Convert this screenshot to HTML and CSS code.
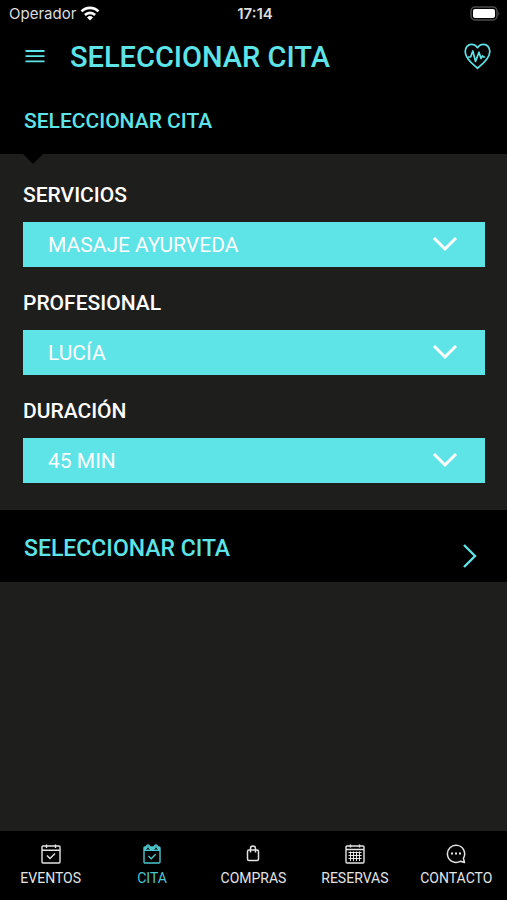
FILE: index.html
```html
<!DOCTYPE html>
<html lang="es">
<head>
  <meta charset="UTF-8">
  <meta name="viewport" content="width=device-width, initial-scale=1.0">
  <title>Seleccionar cita</title>
  <link rel="stylesheet" href="styles.css">
</head>
<body>
  <!-- Status bar -->
  <div class="status-bar">
    <div class="carrier">
      <span>Operador</span>
      <svg width="20" height="15" viewBox="0 0 20 15" fill="none" stroke="#fff" stroke-width="2.6">
        <path d="M1.5 5.4a12 12 0 0 1 17 0"/>
        <path d="M4.9 9a7.2 7.2 0 0 1 10.2 0"/>
        <path d="M10 14.4l-3-3a4.3 4.3 0 0 1 6 0z" fill="#fff" stroke="none"/>
      </svg>
    </div>
    <span class="time">17:14</span>
    <div class="battery">
      <svg width="31" height="15" viewBox="0 0 31 15">
        <rect x="1" y="1" width="26" height="13" rx="4" fill="none" stroke="#4c4c4c" stroke-width="1.5"/>
        <rect x="3" y="3" width="22" height="9" rx="2" fill="#fff"/>
        <path d="M28.5 5.2q1.8 2.3 0 4.6z" fill="#5a5a5a"/>
      </svg>
    </div>
  </div>

  <!-- Header -->
  <header class="header">
    <button class="icon-button" type="button" aria-label="Menú">
      <svg width="20" height="16" viewBox="0 0 20 16" stroke="currentColor" stroke-width="1.8">
        <path d="M0.5 2h19M0.5 7.2h19M0.5 12.4h19"/>
      </svg>
    </button>
    <h1>SELECCIONAR CITA</h1>
    <button class="icon-button" type="button" aria-label="Salud">
      <svg width="27" height="29" viewBox="0 0 27 29" fill="none" stroke="currentColor" stroke-width="1.7" stroke-linejoin="round" stroke-linecap="round">
        <path d="M13.5 25.3C9.5 21.6 1.2 16.3 1.2 8.6C1.2 4.4 4 1.3 7.4 1.3c3 0 5 1.5 6.1 3.4c1.1-1.900 3.100-3.400 6.100-3.400c3.400 0 6.200 3.100 6.200 7.300c0 7.700-8.300 13-12.300 16.700z"/>
        <path d="M4.600 14h2l2.200-6l2.700 10.400l3.500-9.200l2 6.200l1.500-2.600l1 1.200h1"/>
      </svg>
    </button>
  </header>

  <h2 class="section-title">SELECCIONAR CITA</h2>

  <!-- Appointment form -->
  <form class="booking" id="booking">
    <div class="field">
      <label for="service">SERVICIOS</label>
      <div class="select-box">
        <select id="service">
          <option>MASAJE AYURVEDA</option>
        </select>
        <svg class="chevron" width="26" height="16" viewBox="0 0 26 16"><path d="M2 2l11 11l11-11"/></svg>
      </div>
    </div>
    <div class="field">
      <label for="professional">PROFESIONAL</label>
      <div class="select-box">
        <select id="professional">
          <option>LUCÍA</option>
        </select>
        <svg class="chevron" width="26" height="16" viewBox="0 0 26 16"><path d="M2 2l11 11l11-11"/></svg>
      </div>
    </div>
    <div class="field">
      <label for="duration">DURACIÓN</label>
      <div class="select-box">
        <select id="duration">
          <option>45 MIN</option>
        </select>
        <svg class="chevron" width="26" height="16" viewBox="0 0 26 16"><path d="M2 2l11 11l11-11"/></svg>
      </div>
    </div>
  </form>

  <button class="submit" type="submit" form="booking">
    <span>SELECCIONAR CITA</span>
    <svg width="16" height="26" viewBox="0 0 16 26" fill="none" stroke="currentColor" stroke-width="2.4"><path d="M2 2l11 11l-11 11"/></svg>
  </button>

  <!-- Bottom navigation -->
  <nav class="tabs">
    <a href="#">
      <svg width="20" height="20" viewBox="0 0 20 20" fill="none" stroke="currentColor" stroke-width="1.4">
        <rect x="1" y="2" width="18" height="17" rx="1"/>
        <path d="M1 6.200h18M5.500 0.500v3.500M14.500 0.500v3.500M6 11.500l3 3l5-5"/>
      </svg>
      EVENTOS
    </a>
    <a href="#" class="active">
      <svg width="20" height="20" viewBox="0 0 20 20" fill="none" stroke="currentColor" stroke-width="1.4">
        <rect x="2" y="3" width="16" height="16" rx="1"/>
        <path d="M2 3h2v2.500h4v-2.500h4v2.500h4v-2.500h2v4h-16z" fill="currentColor" stroke="none"/>
        <path d="M4.500 5v-2.500a1.500 1.500 0 0 1 3 0v2.500M12.500 5v-2.500a1.500 1.500 0 0 1 3 0v2.500M6.500 12l2.700 2.700l4.500-4.500"/>
      </svg>
      CITA
    </a>
    <a href="#">
      <svg width="20" height="20" viewBox="0 0 20 20" fill="none" stroke="currentColor" stroke-width="1.500">
        <rect x="4.500" y="6" width="11" height="10.500" rx="1.500"/>
        <path d="M7.500 8.500v-4a2.500 2.500 0 0 1 5 0v4"/>
      </svg>
      COMPRAS
    </a>
    <a href="#">
      <svg width="20" height="20" viewBox="0 0 20 20" fill="none" stroke="currentColor" stroke-width="1.400">
        <rect x="1" y="2" width="18" height="17" rx="1"/>
        <path d="M1 5.500h18M5.500 0.500v3M14.500 0.500v3"/>
        <path stroke-width="1" d="M3.500 8.500h13M3.500 11.500h13M3.500 14.500h13M5.500 7.500v9.500M8.500 7.500v9.500M11.500 7.500v9.500M14.500 7.500v9.500"/>
      </svg>
      RESERVAS
    </a>
    <a href="#">
      <svg width="20" height="20" viewBox="0 0 20 20" fill="none" stroke="currentColor" stroke-width="1.500">
        <path d="M14.500 17.200a8.600 8.600 0 1 1 2.900-2.900l1.100 4.200z" stroke-linejoin="round"/>
        <path d="M5 9.500h2M9 9.500h2M13 9.500h2" stroke-width="2"/>
      </svg>
      CONTACTO
    </a>
  </nav>
</body>
</html>
```

FILE: styles.css
```css
* {
  box-sizing: border-box;
}
body {
  margin: 0;
  min-height: 100vh;
  display: flex;
  flex-direction: column;
  font-family: Roboto, sans-serif;
  background: #1e1e1c;
  color: #fff;
}
h1, h2 {
  margin: 0;
  font-weight: 500;
  color: #5ee3e7;
}
button {
  border: none;
  background: none;
  font-family: inherit;
  color: #5ee3e7;
  cursor: pointer;
}
svg {
  display: block;
  flex-shrink: 0;
}

/* Status bar */
.status-bar {
  display: grid;
  grid-template-columns: 1fr auto 1fr;
  align-items: center;
  height: 27px;
  padding: 0 6px 0 9px;
  background: #000;
  font-family: Inter, sans-serif;
  font-size: 15px;
  color: #ddd;
}
.carrier {
  display: flex;
  align-items: center;
  gap: 4px;
}
.time {
  font-size: 15px;
  font-weight: 600;
}
.battery {
  justify-self: end;
}

/* Header */
.header {
  display: flex;
  align-items: center;
  height: 60px;
  padding: 0 16px 0 25px;
  background: #000;
}
.header h1 {
  flex: 1;
  padding-left: 25px;
  font-size: 29px;
  line-height: 34px;
}
.icon-button {
  padding: 0;
}
.section-title {
  position: relative;
  padding: 21px 24px 20px;
  background: #000;
  font-size: 21px;
  line-height: 26px;
}
/* small arrow pointing at the form */
.section-title::after {
  content: "";
  position: absolute;
  left: 23px;
  top: 100%;
  border: 10px solid transparent;
  border-top-color: #000;
  border-bottom: none;
}

/* Form */
.booking {
  display: flex;
  flex-direction: column;
  gap: 24px;
  padding: 29px 22px 27px 23px;
}
.field label {
  display: block;
  margin-bottom: 15px;
  font-size: 21px;
  font-weight: 500;
  line-height: 24px;
}
.select-box {
  position: relative;
}
select {
  display: block;
  width: 100%;
  height: 45px;
  padding: 0 60px 0 25px;
  border: none;
  border-radius: 0;
  appearance: none;
  background: #5ee3e7;
  color: #fff;
  font-family: inherit;
  font-size: 21px;
}
.chevron {
  position: absolute;
  right: 27px;
  top: 14px;
  fill: none;
  stroke: #fff;
  stroke-width: 3;
  pointer-events: none;
}
.submit {
  display: flex;
  justify-content: space-between;
  align-items: flex-end;
  width: 100%;
  height: 72px;
  padding: 0 29px 13px 24px;
  background: #000;
  font-size: 23px;
  font-weight: 500;
  line-height: 40px;
}

/* Bottom navigation */
.tabs {
  display: grid;
  grid-template-columns: repeat(5, 1fr);
  height: 69px;
  margin-top: auto;
  padding-top: 13px;
  background: #000;
}
.tabs a {
  display: flex;
  flex-direction: column;
  align-items: center;
  gap: 5px;
  font-size: 14px;
  line-height: 18px;
  color: #e4e4e4;
  text-decoration: none;
}
.tabs a.active {
  color: #4cc6cb;
}
```
